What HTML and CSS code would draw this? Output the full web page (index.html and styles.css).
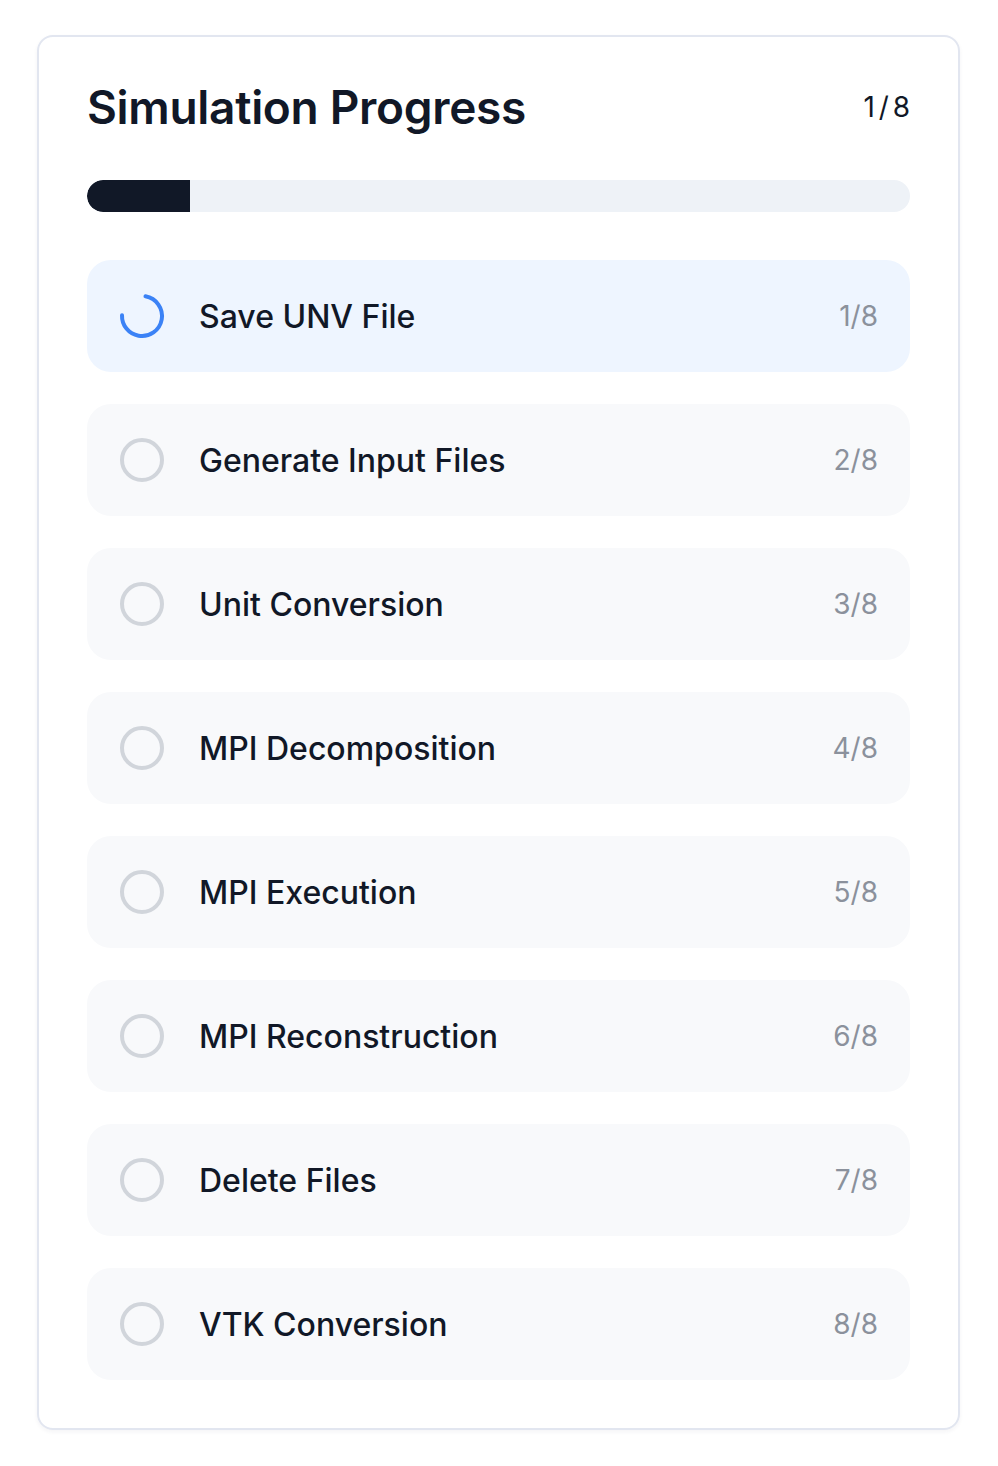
FILE: index.html
```html
<!DOCTYPE html>
<html>
    <head>
        <link rel="stylesheet" href="styles.css">
    </head>
    <body>
        <div class="card">
            <div class="header">
                <h1>Simulation Progress</h1>
                <span class="count">1 / 8</span>
            </div>
            <div class="bar"><div class="fill" style="width:12.5%"></div></div>
            <div class="steps">
                <div class="step active">
                    <svg class="icon" viewBox="0 0 48 48"><circle cx="24" cy="24" r="20" fill="none" stroke="#3b82f6" stroke-width="4" stroke-linecap="round" stroke-dasharray="90.8 200" transform="rotate(-80 24 24)"/></svg>
                    <span class="label">Save UNV File</span>
                    <span class="num">1/8</span>
                </div>
                <div class="step">
                    <svg class="icon" viewBox="0 0 48 48"><circle cx="24" cy="24" r="20" fill="none" stroke="#d1d5db" stroke-width="4"/></svg>
                    <span class="label">Generate Input Files</span>
                    <span class="num">2/8</span>
                </div>
                <div class="step">
                    <svg class="icon" viewBox="0 0 48 48"><circle cx="24" cy="24" r="20" fill="none" stroke="#d1d5db" stroke-width="4"/></svg>
                    <span class="label">Unit Conversion</span>
                    <span class="num">3/8</span>
                </div>
                <div class="step">
                    <svg class="icon" viewBox="0 0 48 48"><circle cx="24" cy="24" r="20" fill="none" stroke="#d1d5db" stroke-width="4"/></svg>
                    <span class="label">MPI Decomposition</span>
                    <span class="num">4/8</span>
                </div>
                <div class="step">
                    <svg class="icon" viewBox="0 0 48 48"><circle cx="24" cy="24" r="20" fill="none" stroke="#d1d5db" stroke-width="4"/></svg>
                    <span class="label">MPI Execution</span>
                    <span class="num">5/8</span>
                </div>
                <div class="step">
                    <svg class="icon" viewBox="0 0 48 48"><circle cx="24" cy="24" r="20" fill="none" stroke="#d1d5db" stroke-width="4"/></svg>
                    <span class="label">MPI Reconstruction</span>
                    <span class="num">6/8</span>
                </div>
                <div class="step">
                    <svg class="icon" viewBox="0 0 48 48"><circle cx="24" cy="24" r="20" fill="none" stroke="#d1d5db" stroke-width="4"/></svg>
                    <span class="label">Delete Files</span>
                    <span class="num">7/8</span>
                </div>
                <div class="step">
                    <svg class="icon" viewBox="0 0 48 48"><circle cx="24" cy="24" r="20" fill="none" stroke="#d1d5db" stroke-width="4"/></svg>
                    <span class="label">VTK Conversion</span>
                    <span class="num">8/8</span>
                </div>
            </div>
        </div>
    </body>
</html>
```

FILE: styles.css
```css
html,body {
    margin: 0;
    background-color: #FFFFFF;
    font-family: Inter, "Noto Sans", sans-serif;
    color: #111827;
}

body {
    padding: 35px 38px 35px 37px;
}

.card {
    border: 2px solid #e2e6f0;
    border-radius: 16px;
    padding: 48px;
    box-shadow: 0 2px 4px rgba(30,41,80,0.05);
}

.header {
    display: flex;
    justify-content: space-between;
    align-items: center;
    height: 44px;
    margin-bottom: 51px;
}

.header h1 {
    margin: 0;
    font-size: 46px;
    font-weight: 600;
    letter-spacing: -0.3px;
}

.count {
    font-size: 28px;
    word-spacing: -4px;
}

.bar {
    height: 32px;
    border-radius: 16px;
    background-color: #eef2f7;
    overflow: hidden;
    margin-bottom: 48px;
}

.fill {
    height: 100%;
    background-color: #111827;
    border-radius: 16px 0 0 16px;
}

.steps {
    display: flex;
    flex-direction: column;
    gap: 32px;
}

.step {
    display: flex;
    align-items: center;
    height: 112px;
    padding: 0 32px 0 31px;
    border-radius: 24px;
    background-color: #f8f9fb;
}

.step.active {
    background-color: #eef5ff;
}

.icon {
    width: 48px;
    height: 48px;
    flex-shrink: 0;
}

.label {
    flex: 1;
    margin-left: 33px;
    font-size: 32px;
    font-weight: 500;
}

.num {
    font-size: 28px;
    color: #8b919c;
}
```
